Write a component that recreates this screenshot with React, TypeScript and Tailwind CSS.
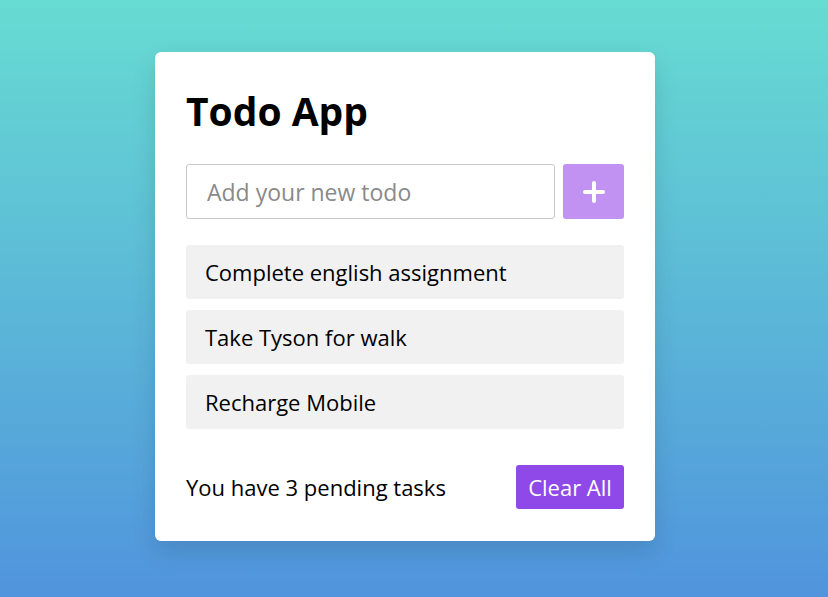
import React, { useState } from 'react';

const initialTodos = ['Complete english assignment', 'Take Tyson for walk', 'Recharge Mobile'];

const App: React.FC = () => {
  const [todos, setTodos] = useState<string[]>(initialTodos);
  const [text, setText] = useState('');

  const addTodo = () => {
    if (!text.trim()) return;
    setTodos([...todos, text.trim()]);
    setText('');
  };

  return (
    <div className="min-h-[597px] w-full bg-[linear-gradient(to_bottom,#67dcd2,#5094dd)] pr-[18px] pt-[52px] font-['Open_Sans',sans-serif]">
      <div className="mx-auto w-[500px] rounded-[6px] bg-white px-[31px] pt-[31px] pb-[32px] shadow-[0_10px_25px_rgba(0,0,0,0.12)]">
        <h1 className="text-[39px] font-bold leading-[56px] text-black">Todo App</h1>

        <div className="mt-[25px] flex gap-[8px]">
          <input
            value={text}
            onChange={(e) => setText(e.target.value)}
            placeholder="Add your new todo"
            className="h-[55px] flex-1 rounded-[3px] border border-[#c8c8c8] px-[20px] text-[23px] text-black outline-none placeholder:text-[#8a8a8a]"
          />
          <button
            onClick={addTodo}
            className="flex h-[55px] w-[61px] items-center justify-center rounded-[3px] bg-[#c192f2]"
          >
            <svg width="22" height="22" viewBox="0 0 22 22" fill="none">
              <path d="M11 2v18M2 11h18" stroke="white" strokeWidth="4" strokeLinecap="round" />
            </svg>
          </button>
        </div>

        <ul className="mt-[26px] flex flex-col gap-[11px]">
          {todos.map((todo, i) => (
            <li
              key={i}
              className="flex h-[54px] items-center rounded-[3px] bg-[#f1f1f1] px-[19px] text-[22px] text-black"
            >
              {todo}
            </li>
          ))}
        </ul>

        <div className="mt-[36px] flex items-center justify-between">
          <span className="text-[22px] text-black">You have {todos.length} pending tasks</span>
          <button
            onClick={() => setTodos([])}
            className="h-[44px] w-[108px] rounded-[3px] bg-[#8e49e8] text-[22px] text-white"
          >
            Clear All
          </button>
        </div>
      </div>
    </div>
  );
};

export default App;
